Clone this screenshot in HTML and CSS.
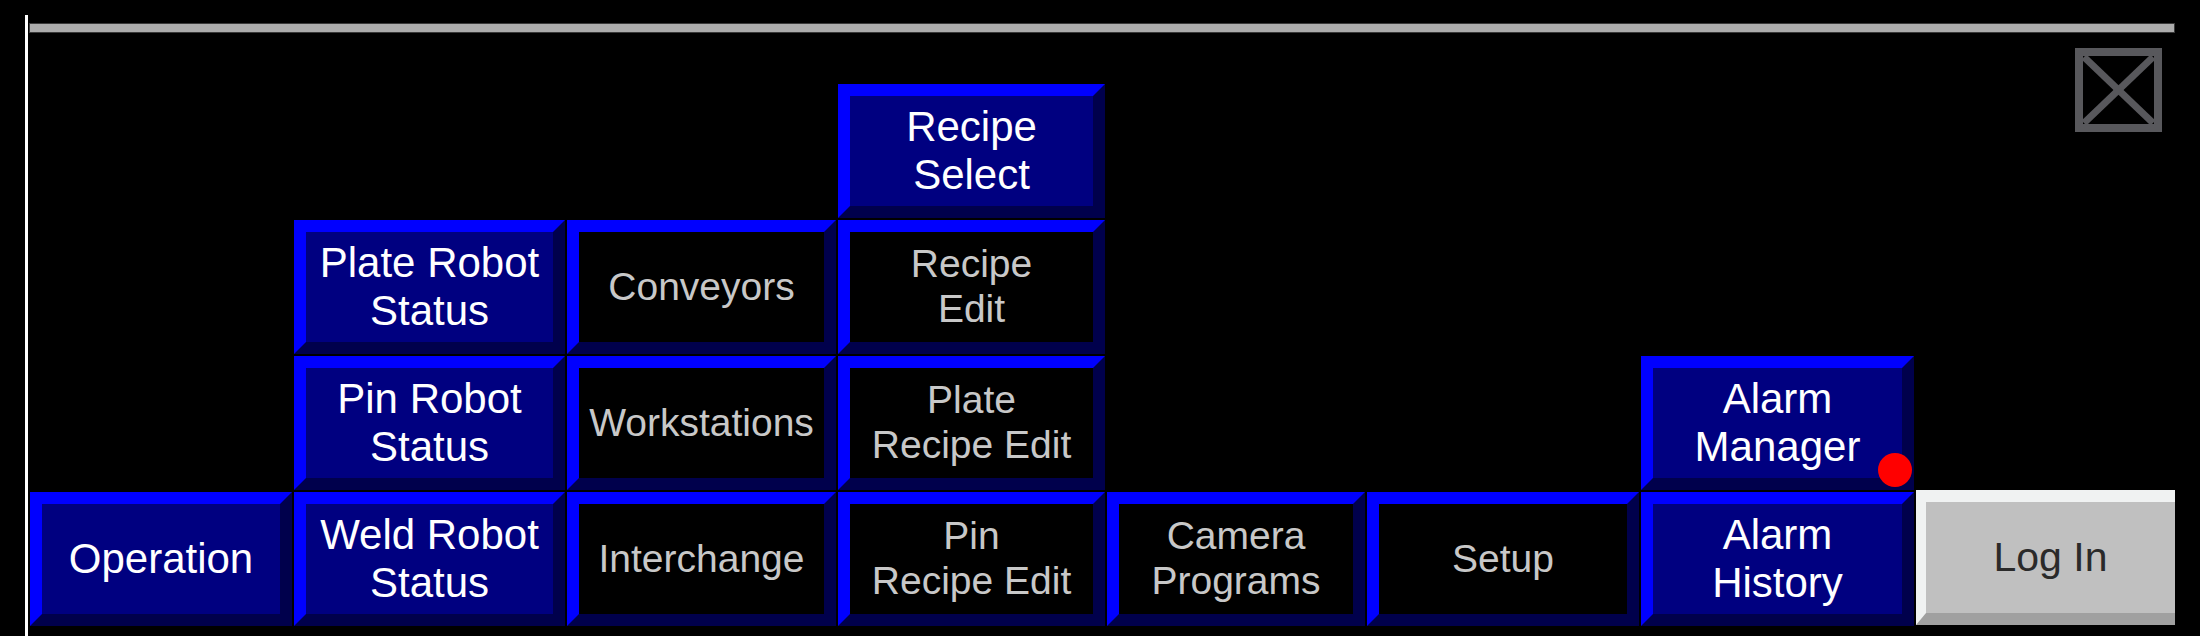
FILE: index.html
```html
<!DOCTYPE html>
<html>
<head>
<meta charset="utf-8">
<link rel="stylesheet" href="styles.css">
</head>
<body>
<div class="screen">
  <div class="frame">
    <div class="topbar"></div>
    <div class="menu">
      <div class="close">
        <svg width="87" height="84" viewBox="0 0 87 84">
          <rect x="4" y="4" width="79" height="76" fill="none" stroke="#58585c" stroke-width="8"/>
          <line x1="9" y1="9" x2="78" y2="75" stroke="#58585c" stroke-width="7"/>
          <line x1="78" y1="9" x2="9" y2="75" stroke="#58585c" stroke-width="7"/>
        </svg>
      </div>
      <div class="btn blue c4 r2">Recipe<br>Select</div>

      <div class="btn blue c2 r3">Plate Robot<br>Status</div>
      <div class="btn dark c3 r3">Conveyors</div>
      <div class="btn dark c4 r3">Recipe<br>Edit</div>

      <div class="btn blue c2 r4">Pin Robot<br>Status</div>
      <div class="btn dark c3 r4">Workstations</div>
      <div class="btn dark c4 r4">Plate<br>Recipe Edit</div>
      <div class="btn blue c7 r4 alarm">Alarm<br>Manager<span class="dot"></span></div>

      <div class="btn blue c1 r5">Operation</div>
      <div class="btn blue c2 r5">Weld Robot<br>Status</div>
      <div class="btn dark c3 r5">Interchange</div>
      <div class="btn dark c4 r5">Pin<br>Recipe Edit</div>
      <div class="btn dark c5 r5">Camera<br>Programs</div>
      <div class="btn dark c6 r5">Setup</div>
      <div class="btn blue c7 r5">Alarm<br>History</div>
      <div class="btn grey c8 r5">Log In</div>
    </div>
  </div>
</div>
</body>
</html>
```

FILE: styles.css
```css
html, body {
  margin: 0;
  padding: 0;
  background: #000;
  overflow: hidden;
}

.screen {
  width: 2200px;
  height: 636px;
  background: #000;
  padding-top: 15px;
  box-sizing: border-box;
}

.frame {
  margin-left: 25px;
  border-left: 3px solid #ffffff;
  height: 621px;
  box-sizing: border-box;
  padding-top: 9px;
}

.topbar {
  margin-left: 2px;
  width: 2144px;
  height: 8px;
  background: #acacac;
  box-shadow: 0 0 0 1px #3a3a3a;
}

.menu {
  margin-top: 16px;
  margin-left: 2px;
  display: grid;
  grid-template-columns: 262px 271px 269px 267px 258px 272px 273px 259px;
  grid-template-rows: 34px 134px 134px 134px 134px;
  column-gap: 2px;
  row-gap: 2px;
}

.close {
  grid-column: 8;
  grid-row: 1 / 3;
  justify-self: end;
  align-self: start;
  margin-right: 13px;
  width: 87px;
  height: 84px;
}

.close svg {
  display: block;
}

.btn {
  position: relative;
  box-sizing: border-box;
  border: 12px solid;
  border-color: #0000ff #00004c #00004c #0000ff;
  display: flex;
  align-items: center;
  justify-content: center;
  text-align: center;
  font-family: "Liberation Sans", Arial, sans-serif;
  line-height: 1.15;
}

.blue {
  background: #000080;
  color: #ffffff;
  font-size: 42px;
}

.dark {
  background: #000000;
  color: #c8c8c8;
  font-size: 39px;
}

.grey {
  background: #c0c0c0;
  color: #2a2a2a;
  font-size: 41px;
  border-width: 12px 0 12px 10px;
  border-color: #f0f2f2 #a0a0a0 #a0a0a0 #f0f2f2;
  margin-top: -2px;
  margin-bottom: 1px;
}

.c1 { grid-column: 1; }
.c2 { grid-column: 2; }
.c3 { grid-column: 3; }
.c4 { grid-column: 4; }
.c5 { grid-column: 5; }
.c6 { grid-column: 6; }
.c7 { grid-column: 7; }
.c8 { grid-column: 8; }

.r2 { grid-row: 2; }
.r3 { grid-row: 3; }
.r4 { grid-row: 4; }
.r5 { grid-row: 5; }

.dot {
  position: absolute;
  right: -10px;
  bottom: -9px;
  width: 34px;
  height: 34px;
  border-radius: 50%;
  background: #ff0000;
}
```
